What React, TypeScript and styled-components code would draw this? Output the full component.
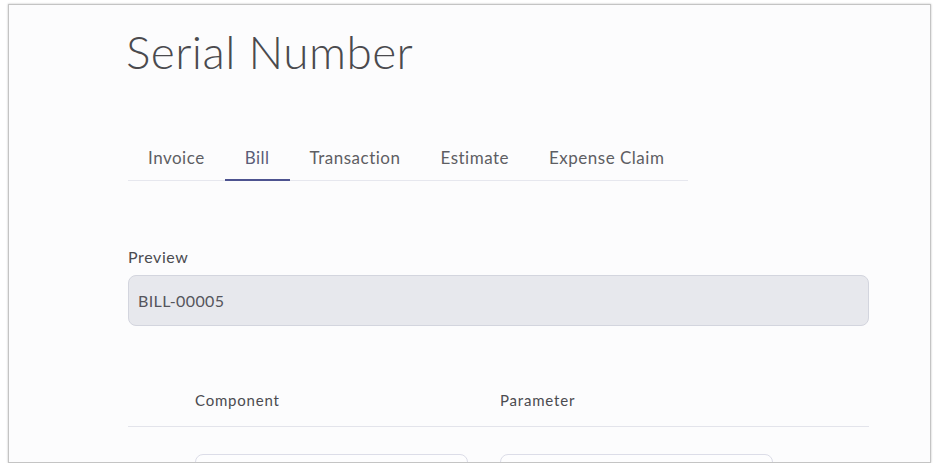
import React, { useState } from "react";
import styled, { createGlobalStyle } from "styled-components";

const GlobalStyle = createGlobalStyle`
  html, body {
    margin: 0;
    padding: 0;
    background: #ffffff;
    font-family: Lato, "Noto Sans", sans-serif;
  }
`;

const Frame = styled.div`
  box-sizing: border-box;
  margin: 4px 0 0 8px;
  width: 923px;
  height: 459px;
  border: 1px solid #c4c4c4;
  box-shadow: 0 0 2px rgba(0, 0, 0, 0.25);
  background: #fcfcfd;
  overflow: hidden;
  padding: 0 0 0 119px;
`;

const Title = styled.h1`
  margin: 19px 0 0 -2px;
  font-family: Lato, sans-serif;
  font-weight: 300;
  font-size: 46px;
  line-height: 56px;
  color: #4a4a4e;
  letter-spacing: 0.4px;
`;

const TabBar = styled.div`
  display: flex;
  width: 560px;
  margin-top: 57px;
  border-bottom: 1px solid #e6e7ee;
`;

const Tab = styled.button<{ $active?: boolean }>`
  appearance: none;
  flex-shrink: 0;
  white-space: nowrap;
  background: none;
  border: none;
  border-bottom: 2px solid ${(p) => (p.$active ? "#4d5390" : "transparent")};
  margin-bottom: -1px;
  padding: 10px 20px 11px;
  font-family: Lato, sans-serif;
  font-size: 17px;
  letter-spacing: 0.5px;
  color: ${(p) => (p.$active ? "#5a5d78" : "#5e5e63")};
  cursor: pointer;
`;

const Field = styled.div`
  margin-top: 66px;
  width: 741px;
`;

const Label = styled.div`
  font-size: 16px;
  letter-spacing: 0.6px;
  color: #4b4b50;
  margin-bottom: 9px;
`;

const PreviewBox = styled.div`
  box-sizing: border-box;
  height: 51px;
  display: flex;
  align-items: center;
  padding: 0 9px;
  background: #e7e8ed;
  border: 1px solid #d3d5de;
  border-radius: 8px;
  font-size: 16px;
  letter-spacing: 0.4px;
  color: #55555c;
`;

const TableHead = styled.div`
  display: grid;
  grid-template-columns: 67px 305px 1fr;
  width: 741px;
  margin-top: 65px;
  padding-bottom: 17px;
  border-bottom: 1px solid #e3e4eb;
`;

const HeadCell = styled.div`
  font-size: 15px;
  color: #4b4b50;
  letter-spacing: 0.8px;
`;

const Row = styled.div`
  display: grid;
  grid-template-columns: 67px 305px 1fr;
  width: 741px;
  margin-top: 27px;
`;

const InputBox = styled.div`
  box-sizing: border-box;
  width: 273px;
  height: 40px;
  border: 1px solid #dcdde8;
  border-radius: 8px;
  background: #fdfdfe;
`;

const tabs = ["Invoice", "Bill", "Transaction", "Estimate", "Expense Claim"];

export default function App() {
  const [active, setActive] = useState("Bill");
  return (
    <>
      <GlobalStyle />
      <Frame>
        <Title>Serial Number</Title>
        <TabBar>
          {tabs.map((t) => (
            <Tab key={t} $active={t === active} onClick={() => setActive(t)}>
              {t}
            </Tab>
          ))}
        </TabBar>
        <Field>
          <Label>Preview</Label>
          <PreviewBox>BILL-00005</PreviewBox>
        </Field>
        <TableHead>
          <span />
          <HeadCell>Component</HeadCell>
          <HeadCell>Parameter</HeadCell>
        </TableHead>
        <Row>
          <span />
          <InputBox />
          <InputBox />
        </Row>
      </Frame>
    </>
  );
}
